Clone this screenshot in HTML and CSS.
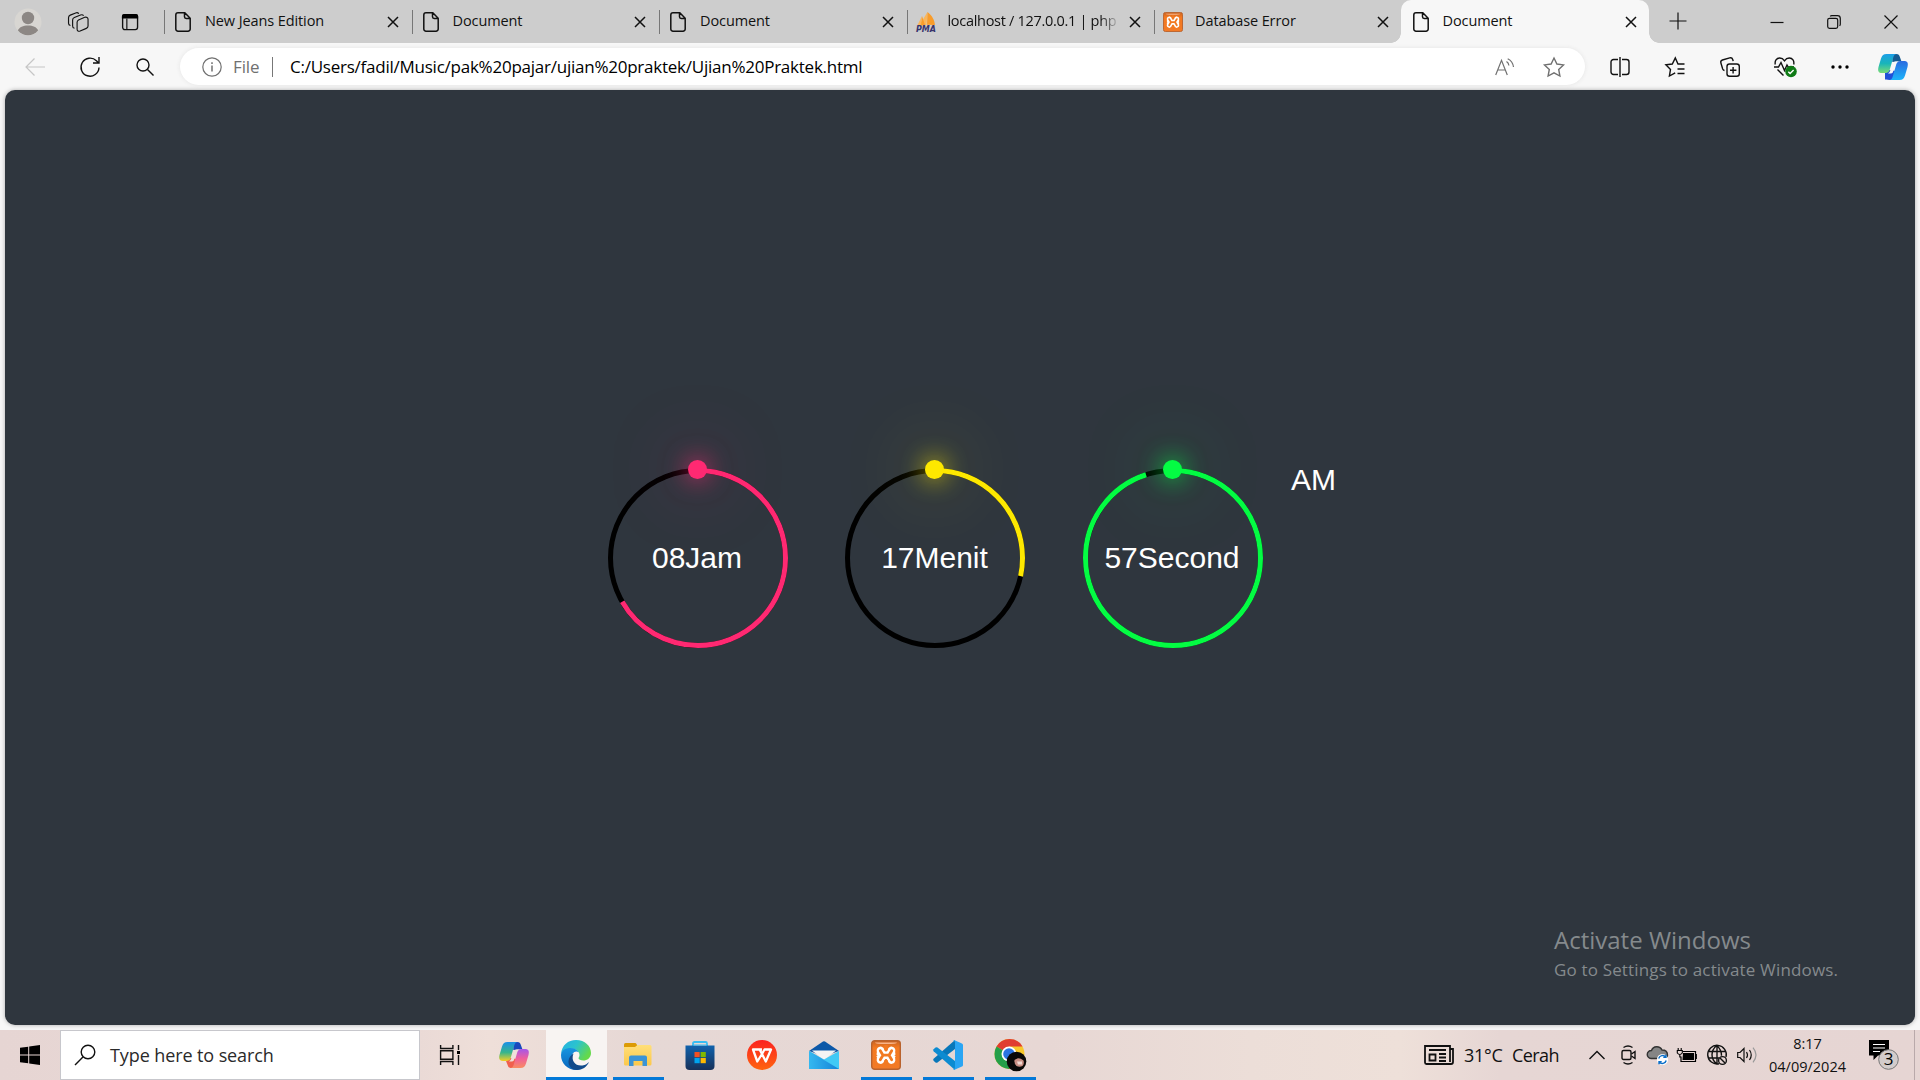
FILE: index.html
```html
<!DOCTYPE html>
<html lang="id">
<head>
<meta charset="utf-8">
<title>Document</title>
<link rel="stylesheet" href="styles.css">
</head>
<body>
<svg class="defs" width="0" height="0">
  <defs>
    <symbol id="page" viewBox="0 0 16 20"><path d="M3 .8h6.800l5.400 5.400v10.800a2.200 2.200 0 0 1-2.200 2.200H3A2.200 2.200 0 0 1 .8 17V3A2.200 2.200 0 0 1 3 .8zM9.500 1v3.800a1.700 1.700 0 0 0 1.700 1.700h3.800" fill="none" stroke="#111" stroke-width="1.500"/></symbol>
    <symbol id="cross" viewBox="0 0 12 12"><path d="M1 1l10 10M11 1L1 11" stroke="#111" stroke-width="1.500" fill="none"/></symbol>
    <linearGradient id="xamppFill" x1="0" y1="0" x2="0" y2="1"><stop offset="0" stop-color="#c96322"/><stop offset=".25" stop-color="#f47920"/><stop offset="1" stop-color="#f27a26"/></linearGradient>
    <symbol id="xampp" viewBox="0 0 30 30">
      <rect x=".7" y=".7" width="28.600" height="28.600" rx="3" fill="url(#xamppFill)" stroke="#b9622d" stroke-width="1.400"/>
      <path d="M4 2.500h22q0 1.500-11 1.500T4 2.500z" fill="#f8b48a"/>
      <path d="M9.500 10.500v2.500q0 2 0 7M20.500 10.500v9.500M9 15.300h12M9.500 10.500l3 4.500-3 5M20.500 10.500l-3 4.500 3 5" fill="none" stroke="#fff" stroke-width="8.600" stroke-linecap="round" stroke-linejoin="round" class="knot"/>
      <path d="M9.300 10.700l2.700 4.500-2.700 4.600M20.700 10.700L18 15.200l2.700 4.600M11.500 15.200h7" fill="none" stroke="#f27a22" stroke-width="2.800" stroke-linecap="round"/>
      <path d="M13.300 5h3.400v5.200q-1.700 2-3.400 0zM13.300 25.500h3.400v-5.200q-1.700-2-3.400 0zM4 13.700l2.700 1.500L4 16.700zM26 13.700l-2.700 1.500 2.700 1.500z" fill="#f27a22"/>
    </symbol>
    <linearGradient id="cpA" x1="0" y1="0" x2="0" y2="1"><stop offset="0" stop-color="#1c9ee8"/><stop offset=".5" stop-color="#19b5b9"/><stop offset="1" stop-color="#7bdc75"/></linearGradient>
    <linearGradient id="cpB" x1="0" y1="0" x2="0" y2="1"><stop offset="0" stop-color="#2a6be0"/><stop offset="1" stop-color="#1cb4fa"/></linearGradient>
    <linearGradient id="cpC" x1="0" y1="0" x2="0" y2="1"><stop offset="0" stop-color="#1a8fe8"/><stop offset=".55" stop-color="#36b58c"/><stop offset="1" stop-color="#f4cf24"/></linearGradient>
    <linearGradient id="cpD" x1="0" y1="0" x2="0" y2="1"><stop offset="0" stop-color="#a457ea"/><stop offset=".5" stop-color="#ef5f9c"/><stop offset="1" stop-color="#f98d61"/></linearGradient>
    <linearGradient id="edgeTop" x1="0" y1="0" x2="1" y2=".5"><stop offset="0" stop-color="#27aee4"/><stop offset=".5" stop-color="#2bc3ce"/><stop offset="1" stop-color="#64d94b"/></linearGradient>
    <linearGradient id="edgeLow" x1="0" y1="0" x2="0" y2="1"><stop offset="0" stop-color="#1795e0"/><stop offset="1" stop-color="#0a66bd"/></linearGradient>
    <linearGradient id="folder" x1="0" y1="0" x2="0" y2="1"><stop offset="0" stop-color="#ffdf79"/><stop offset="1" stop-color="#fcc84b"/></linearGradient>
    <linearGradient id="store" x1="0" y1="0" x2="0" y2="1"><stop offset="0" stop-color="#0f62ad"/><stop offset="1" stop-color="#183159"/></linearGradient>
    <linearGradient id="wps" x1="0" y1="0" x2="0" y2="1"><stop offset="0" stop-color="#fb2320"/><stop offset="1" stop-color="#ff6410"/></linearGradient>
    <linearGradient id="mail" x1="0" y1="0" x2="1" y2="0"><stop offset="0" stop-color="#35b8f0"/><stop offset="1" stop-color="#1583d8"/></linearGradient>
  </defs>
</svg>

<header class="tabstrip">
  <div class="slot"><svg width="28" height="28" viewBox="0 0 28 28"><circle cx="14" cy="14" r="13.500" fill="#d8d6d2"/><circle cx="14" cy="10" r="6.200" fill="#8c8784"/><path d="M3.900 22.500C5.500 19 9 17.600 14 17.600s8.500 1.400 10.100 4.900A13.300 13.300 0 0 1 3.900 22.500z" fill="#8c8784"/></svg></div>
  <div class="slot"><svg class="line" width="22" height="20" viewBox="1 0 22 21"><path d="M11.500 8.300l6.500-2.700c1.900-.7 3.500.2 3.500 2v7.200c0 1.200-.7 2-1.800 2.400L13.200 20c-1.900.6-3.200-.3-3.200-2v-7.200c0-1.200.5-2 1.500-2.500zM7.300 17c-1.300-.2-2-1-2-2.400V8.500c0-1.300.6-2.200 1.800-2.700l6.500-2.600c1.400-.5 2.600-.2 3.200.8M3 14.200c-1.300-.2-2-1-2-2.300V6c0-1.300.6-2.200 1.800-2.700L8.500 1c1.400-.5 2.600-.2 3.200.8"/></svg></div>
  <div class="slot"><svg width="18" height="18" viewBox="0 0 20 20"><rect x="1.800" y="1.800" width="16.600" height="16.600" rx="2.500" fill="none" stroke="#111" stroke-width="1.500"/><path d="M1 6V3.500A2.500 2.500 0 0 1 3.500 1h13A2.500 2.500 0 0 1 19 3.500V6z"/><path d="M6.500 6v12" stroke="#111" stroke-width="1.300"/></svg></div>
  <nav class="tabs">
    <div class="tab"><svg class="fav page"><use href="#page"/></svg><span class="title">New Jeans Edition</span><svg class="x"><use href="#cross"/></svg></div>
    <div class="tab"><svg class="fav page"><use href="#page"/></svg><span class="title">Document</span><svg class="x"><use href="#cross"/></svg></div>
    <div class="tab"><svg class="fav page"><use href="#page"/></svg><span class="title">Document</span><svg class="x"><use href="#cross"/></svg></div>
    <div class="tab pma"><svg class="fav" viewBox="0 0 20 20"><path d="M11.500 0l-1 13L3 14zM6 4L5 13l-4 1z" fill="#fab65a"/><path d="M11.500 0c5 4 7 8 7.500 13l-8-.2zM6 4l3 9-4 .5z" fill="#f89c2a"/><text x="0" y="19.500" textLength="20" class="pma-text">PMA</text></svg><span class="title fade">localhost / 127.0.0.1 | php</span><svg class="x"><use href="#cross"/></svg></div>
    <div class="tab pma"><svg class="fav"><use href="#xampp"/></svg><span class="title">Database Error</span><svg class="x"><use href="#cross"/></svg></div>
    <div class="tab active"><svg class="fav page"><use href="#page"/></svg><span class="title">Document</span><svg class="x"><use href="#cross"/></svg></div>
  </nav>
  <div class="newtab"><svg class="line" width="18" height="18" viewBox="0 0 18 18"><path d="M9 .5v17M.5 9h17"/></svg></div>
  <div class="wincontrols">
    <svg class="line" width="14" height="14" viewBox="0 0 14 14"><path d="M.5 7.500h13"/></svg>
    <svg class="line" width="14" height="14" viewBox="0 0 14 14"><rect x=".7" y="3.300" width="10" height="10" rx="1.800"/><path d="M3.200 1.400C3.700.8 4 .7 4.700.7h5.800a2.800 2.800 0 0 1 2.800 2.800v5.800c0 .7-.2 1-.7 1.500"/></svg>
    <svg class="line" width="14" height="14" viewBox="0 0 14 14"><path d="M.5.5l13 13M13.500.5l-13 13"/></svg>
  </div>
</header>

<div class="toolbar">
  <div class="tool"><svg class="line pale" width="20" height="18" viewBox="0 0 20 18"><path d="M20 9H1M9.500.5L1 9l8.500 8.500"/></svg></div>
  <div class="tool"><svg class="line thick" width="20" height="22" viewBox="0 0 20 22"><path d="M19 11.500a9 9 0 1 1-2.600-6.700l2 2M19 1v6h-6"/></svg></div>
  <div class="tool"><svg class="line thick" width="18" height="18" viewBox="0 0 18 18"><circle cx="7" cy="7" r="6"/><path d="M11.500 11.500l6 6"/></svg></div>
  <div class="address">
    <svg class="line grey" width="20" height="20" viewBox="0 0 20 20"><circle cx="10" cy="10" r="9.200"/><path d="M10 8.500v6M10 5.300v1.600" stroke-width="1.500"/></svg>
    <span class="scheme">File</span><i class="bar"></i><span class="url">C:/Users/fadil/Music/pak%20pajar/ujian%20praktek/Ujian%20Praktek.html</span>
    <svg class="line grey read" width="20" height="18" viewBox="0 0 20 18"><path d="M.7 17L6.500 2.300 12.300 17M2.700 12h7.600M11.500 3.500c1.400.9 2.200 2.200 2.400 4M12.700.7c3.300 1.600 5.300 4.500 5.800 8.300" /></svg>
    <svg class="line grey star" width="22" height="20" viewBox="0 0 22 20"><path d="M11 1l2.900 6 6.600.9-4.800 4.600 1.200 6.500-5.900-3.100L5.100 19l1.200-6.500L1.500 7.900 8.100 7z" stroke-width="1.400"/></svg>
  </div>
  <div class="tool"><svg class="line thick" width="20" height="20" viewBox="0 0 20 20"><path d="M8 2.500H3.500A2.500 2.500 0 0 0 1 5v10a2.500 2.500 0 0 0 2.500 2.500H8M12 2.500h4.500A2.500 2.500 0 0 1 19 5v10a2.500 2.500 0 0 1-2.500 2.500H12M10 0v20"/></svg></div>
  <div class="tool"><svg class="line thick" width="20" height="20" viewBox="0 0 20 20"><path d="M19.500 7H13L10.300 1 7.300 7 .9 7.800l4.600 4.600L4.400 19l5.800-3.100M12.500 12h7M12.500 16.500h7"/></svg></div>
  <div class="tool"><svg class="line thick" width="20" height="20" viewBox="0 0 20 20"><rect x="7" y="7" width="12.300" height="12.300" rx="2.500"/><path d="M13.100 10v6.400M10 13.200h6.400M4.500 13.500c-.9-.2-1.500-.8-1.800-1.600L.9 6c-.4-1.300.2-2.500 1.500-3L9.700.9c1.500-.4 2.600.3 3 1.600l.5 1.600"/></svg></div>
  <div class="tool"><svg class="line thick" width="22" height="20" viewBox="0 0 22 20"><path d="M1.300 7.500C.5 4 2.500 1 5.700 1 8 1 9.500 2.300 10.500 3.800 11.500 2.300 13 1 15.300 1c3.200 0 5.200 3 4.400 6.500M0 10h4.500L7 5.500l3.500 8L13 8l1.200 2H20M3.500 12.500l6 6"/><circle cx="17" cy="14.500" r="5.800" fill="#0f7b16" stroke="none"/><path d="M14.300 14.700l1.800 1.800 3.500-3.500" stroke="#fff"/></svg></div>
  <div class="tool"><svg width="18" height="4" viewBox="0 0 18 4"><circle cx="2" cy="2" r="1.700"/><circle cx="9" cy="2" r="1.700"/><circle cx="16" cy="2" r="1.700"/></svg></div>
  <div class="tool last"><svg width="30" height="28" viewBox="0 0 30 28"><path d="M14 1h4.500c2 0 2.800 1 3.400 3l1.400 4-9 1z" fill="#175b91"/><path d="M7 26.500c1.500 0 4 .5 6 .5h2.500l2.500-9-7-1-4 3z" fill="#2050d8"/><path d="M8.500 1H19c-2 0-3 1-3.600 3l-3.600 12.500c-.7 2.300-1.800 3.500-4.300 3.500H4c-3.500 0-4.500-2-3.500-6L3 5.500C4 2.300 5.500 1 8.500 1z" fill="url(#cpA)"/><path d="M21.500 27H11c2 0 3-1 3.600-3l3.600-12.500C18.900 9.200 20 8 22.500 8H26c3.500 0 4.500 2 3.500 6L27 22.500c-1 3.200-2.500 4.500-5.500 4.500z" fill="url(#cpB)"/><path d="M17.500 8.500h2.500q-2 1-2.700 3.500l-2.500 7.500q-.6 1-2.300 1h-2.500q1.800-1 2.500-3.500l2.200-6.500q.8-2 2.800-2z" fill="#f7f7f7"/></svg></div>
</div>

<main class="viewport">
  <section class="time">
    <div class="circle pink"><svg viewBox="0 0 180 180"><circle cx="90" cy="90" r="87.500" class="track"/><circle cx="90" cy="90" r="87.500" pathLength="60" stroke-dasharray="40 60" class="arc"/></svg><i class="dot"></i><span>08Jam</span></div>
    <div class="circle yellow"><svg viewBox="0 0 180 180"><circle cx="90" cy="90" r="87.500" class="track"/><circle cx="90" cy="90" r="87.500" pathLength="60" stroke-dasharray="17 60" class="arc"/></svg><i class="dot"></i><span>17Menit</span></div>
    <div class="circle green"><svg viewBox="0 0 180 180"><circle cx="90" cy="90" r="87.500" class="track"/><circle cx="90" cy="90" r="87.500" pathLength="60" stroke-dasharray="57 60" class="arc"/></svg><i class="dot"></i><span>57Second</span></div>
    <div class="ampm">AM</div>
  </section>
</main>
<aside class="watermark"><div class="w1">Activate Windows</div><div class="w2">Go to Settings to activate Windows.</div></aside>

<footer class="taskbar">
  <div class="start"><svg width="20" height="20" viewBox="0 0 20 20"><path d="M0 2.800L8.200 1.700V9.500H0zM9.200 1.500L20 0v9.500H9.200zM0 10.500h8.200v7.800L0 17.200zM9.200 10.500H20V20L9.200 18.500z"/></svg></div>
  <div class="search"><svg class="line thick" width="22" height="22" viewBox="0 0 22 22"><circle cx="14" cy="8" r="6.800"/><path d="M9.200 12.800L1 21"/></svg><span>Type here to search</span></div>
  <div class="taskview"><svg class="line thick" width="20" height="20" viewBox="0 0 20 20"><path d="M.6 0v3.500h12.300V0M.6 20v-3.500h12.300V20M.6 5.800h12.300v8.400H.6zM18.500 0v5M18.500 10v10"/><path d="M17 6h3v3h-3z" fill="#000" stroke="none"/></svg></div>
  <div class="apps">
    <div class="app"><svg width="30" height="28" viewBox="0 0 30 28"><path d="M14 1h4.500c2 0 2.800 1 3.400 3l1.400 4-9 1z" fill="#1848bd"/><path d="M7 20l2 5c.5 1.500 1.500 2 4 2h2.500l2.500-9-7-1z" fill="#f0604d"/><path d="M8.500 1H19c-2 0-3 1-3.600 3l-3.600 12.500c-.7 2.300-1.800 3.500-4.300 3.500H4c-3.500 0-4.500-2-3.500-6L3 5.500C4 2.300 5.500 1 8.500 1z" fill="url(#cpC)"/><path d="M21.500 27H11c2 0 3-1 3.600-3l3.600-12.500C18.900 9.200 20 8 22.500 8H26c3.500 0 4.500 2 3.500 6L27 22.500c-1 3.200-2.500 4.500-5.500 4.500z" fill="url(#cpD)"/><path d="M17.500 8.500h2.500q-2 1-2.700 3.500l-2.500 7.500q-.6 1-2.300 1h-2.500q1.800-1 2.500-3.500l2.200-6.500q.8-2 2.800-2z" fill="#efe0da"/></svg></div>
    <div class="app current"><svg width="30" height="30" viewBox="0 0 30 30"><path d="M0 14C1 5 7 0 15 0c9 0 15 6 15 13 0 5-4 7.500-7.500 7.500-3 0-5-1-5-2.200 0-.8 1-1.300 1-3.300 0-3-3-6.500-8.500-6.500C5 8.500 1 11 0 14z" fill="url(#edgeTop)"/><path d="M0 15c0-4.500 4.500-7 9.500-7 4 0 7 2 8 4-4-2-7 1.500-7 6 0 6 4 11 9 11.500C8 32 0 24 0 15z" fill="url(#edgeLow)"/><path d="M12.500 13.500c-3 7 2 13 9 12 3-.5 5-2 6.500-3.500-2 5-7 8-12 8-6 0-9-5-8.500-9 .3-3.500 2.500-6 5-7.500z" fill="#114a8b"/></svg></div>
    <div class="app open"><svg width="28" height="24" viewBox="0 0 28 24"><path d="M0 1.500Q0 0 1.500 0h10L13 1.500V4H0z" fill="#dc9b05"/><path d="M0 4h11l2.500-2H26q1.500 0 1.500 1.500V21q0 1.500-1.500 1.500H1.500Q0 22.500 0 21z" fill="url(#folder)"/><path d="M5 23V14.500q0-2 2-2h14q2 0 2 2V23h-4.500v-5h-9v5z" fill="#3b94d6"/></svg></div>
    <div class="app"><svg width="30" height="30" viewBox="0 0 30 30"><path d="M8 7V3.500Q8 2 9.500 2h11Q22 2 22 3.500V7" fill="none" stroke="#35bdf3" stroke-width="1.800"/><path d="M.5 5.500h29V26q0 4-4 4h-21q-4 0-4-4z" fill="url(#store)"/><path d="M8 5h14" stroke="#35bdf3"/><path d="M9.500 12h5.200v5.200H9.500z" fill="#f25022"/><path d="M15.600 12h5.200v5.200h-5.200z" fill="#7fba00"/><path d="M9.500 18h5.200v5.200H9.500z" fill="#00a4ef"/><path d="M15.600 18h5.200v5.200h-5.200z" fill="#ffb900"/></svg></div>
    <div class="app"><svg width="30" height="30" viewBox="0 0 30 30"><circle cx="15" cy="15" r="15" fill="url(#wps)"/><path d="M15 9.500H6L10.300 21.500 15 14l3.800 7.500L24 9.500h-6.500L15 14l-2.200-4" fill="none" stroke="#fff" stroke-width="2.300" stroke-linejoin="round"/></svg></div>
    <div class="app"><svg width="30" height="28" viewBox="0 0 30 28"><path d="M0 10L14 .5q1-.5 2 0L30 10 15 15z" fill="#0c58a8"/><path d="M3 9.500h24L15 19z" fill="#f4f4f4"/><path d="M0 10l15 8.500L30 10v18H0z" fill="#41c9f5"/><path d="M0 10v18h30z" fill="url(#mail)"/></svg></div>
    <div class="app open"><svg width="30" height="30"><use href="#xampp"/></svg></div>
    <div class="app open"><svg width="30" height="30" viewBox="0 0 30 30"><path d="M22 0v9L4.500 22.500q-1 .7-2 0L.6 20.700q-1-1 0-2z" fill="#0877b9"/><path d="M22 30v-9L4.500 7.500q-1-.7-2 0L.6 9.300q-1 1 0 2z" fill="#0c8bd1"/><path d="M21.500.3L29 3.600q1 .5 1 1.500v19.800q0 1-1 1.500l-7.500 3.300q-1 .2-1.500-.5 2 .3 2-2V2.800q0-2.300-2-2 .5-.8 1.500-.5z" fill="#2aa5f3"/></svg></div>
    <div class="app open"><svg width="32" height="32" viewBox="-1 -1 32 32"><circle cx="14.500" cy="14" r="15" fill="#f8c82c"/><path d="M14 14L1.500 6.500A15 15 0 0 1 27.500 6.500H14z" fill="#e03c31"/><path d="M14 14L1.500 6.500A15 15 0 0 0 14 29l5-12z" fill="#249f49"/><circle cx="14" cy="14" r="7.500" fill="#fff"/><circle cx="14" cy="14" r="5.800" fill="#2a74e2"/><circle cx="21.500" cy="21.500" r="9.800" fill="#090807"/><path d="M19.500 20q4-3.500 9 .5 1 3.500-1 5.500-3 1.500-6 0-2.500-2.500-2-6z" fill="#c98f84"/><path d="M22 21.500h5v3h-4z" fill="#f1d9d2"/></svg></div>
  </div>
  <div class="weather"><svg class="line news" width="30" height="20" viewBox="0 0 30 20"><path d="M26 1H1v16.500q0 1.500 1.500 1.500H27q2 0 2-2V4h-3zM26 4v13M5 5h17M15 9h7M15 12.500h7M15 16h7M5.500 9.500h6v6h-6z"/></svg><span class="deg">31°C</span><span class="sky">Cerah</span></div>
  <div class="tray">
    <svg class="line thick" width="16" height="10" viewBox="0 0 16 10"><path d="M.5 9L8 1.500 15.500 9"/></svg>
    <svg class="line thick" width="16" height="20" viewBox="0 0 16 20"><rect x="1" y="5.500" width="9" height="9" rx="1.500"/><path d="M10.500 9L14 6.500v7L10.500 11M2.500 2.500q4.500-3 9 0M2.500 17.500q4.500 3 9 0"/></svg>
    <svg width="22" height="20" viewBox="0 0 22 20"><path d="M4 13.500A4 4 0 0 1 4.500 5.500C6 .5 13 .5 15 5c3.500 0 5.500 2 5.500 5q0 3.500-3 3.500z" fill="#858585" stroke="#333" stroke-width="1.400"/><circle cx="15.500" cy="14.500" r="5.600" fill="#fff"/><path d="M11.700 13.500a4 4 0 0 1 7-1.500M19.200 15.500a4 4 0 0 1-7 1.500M19 9.700v2.700h-2.700M12 19.300v-2.700h2.700" fill="none" stroke="#0a6ec8" stroke-width="1.400"/></svg>
    <svg width="20" height="16" viewBox="0 0 20 16"><path d="M5.500 4.500h13v10H4V9.500M19.300 7v5" fill="none" stroke="#000" stroke-width="1.200"/><path d="M6 6h11v7H5.500z"/><path d="M1.200 1v2.500M4.200 1v2.500M.3 3.500h5v2.500q-2.500 3-5 0zM2.800 7.500V10H4" stroke="#000" fill="none" stroke-width="1.100"/></svg>
    <svg class="line thick" width="20" height="20" viewBox="0 0 20 20"><path d="M12 18.700A9.300 9.300 0 1 1 19 12M9.500.8c-6 5-6 13 0 18M10 .8c3.500 3 4.500 6.500 4.500 10M10 .8V19M1.500 6.500h17M1.500 13H12"/><circle cx="15.500" cy="15.500" r="3.900"/><path d="M13 13l5 5"/></svg>
    <svg class="line" width="20" height="16" viewBox="0 0 20 16"><path d="M.7 5.500H3L7 1.500v13l-4-4H.7zM9.500 5q2 3 0 6M12.500 3q3.500 5 0 10"/><path d="M16 .7q6 7.300 0 14.600" stroke="#999"/></svg>
  </div>
  <div class="datetime"><span>8:17</span><span>04/09/2024</span></div>
  <div class="notif"><svg width="30" height="32" viewBox="0 0 30 32"><path d="M0 1h20v15.500H9L4.500 21v-4.500H0z"/><path d="M4 5.500h12M4 9h12M4 12.500h7" stroke="#fff" stroke-width="1.100"/><circle cx="19.500" cy="20.500" r="9.800" fill="#d3cccb" stroke="#777"/><text x="19.500" y="26" text-anchor="middle" class="count">3</text></svg></div>
  <div class="desk"></div>
</footer>
</body>
</html>
```
FILE: styles.css
```css
* { box-sizing: border-box; }
body {
  margin: 0; width: 1920px; height: 1080px; overflow: hidden;
  background: #f7f7f7; color: #111; position: relative;
  font-family: "Open Sans", "Noto Sans", sans-serif;
  display: flex; flex-direction: column;
}
svg { display: block; flex: none; overflow: visible; }
.defs { position: absolute; }
.line { fill: none; stroke: #111; stroke-width: 1.2; }
.thick { stroke-width: 1.4; }
.pale { stroke: #c6c6c6; }
.grey { stroke: #707070; }
.knot { stroke-width: 7.4px; }

.tabstrip { height: 43px; background: #cdcdcd; display: flex; align-items: center; padding-left: 2px; flex: none; }
.slot { width: 51px; display: flex; justify-content: center; }
.slot:nth-child(3) { width: 52px; margin-right: 7px; }
.tabs { display: flex; height: 43px; align-self: stretch; margin-right: 4px; }
.tab { width: 247.5px; display: flex; align-items: center; padding: 0 12px; position: relative; flex: none; }
.tab:last-child { width: 248.5px; }
.tab::before { content: ""; position: absolute; left: 1px; top: 10px; width: 1px; height: 24px; background: #777; }
.fav { width: 20px; height: 20px; }
.fav.page { width: 16px; }
.title { font-size: 14.5px; line-height: 20px; margin: -2px 0 0 14px; flex: 1; white-space: nowrap; letter-spacing: -.1px; }
.x { width: 12px; height: 12px; }
.pma { padding-left: 10px; }
.pma .title { margin-left: 12px; }
.pma .fade { letter-spacing: -.3px; -webkit-mask-image: linear-gradient(90deg, #000 152px, transparent 172px); }
.pma-text { font: italic bold 8px "DejaVu Sans", sans-serif; fill: #37346b; }
.active { background: #f7f7f7; border-radius: 10px 10px 0 0; }
.active::before { left: -10px; top: auto; bottom: 0; width: 10px; height: 10px; background: radial-gradient(circle at 0 0, transparent 9.5px, #f7f7f7 10px); }
.active::after { content: ""; position: absolute; right: -10px; bottom: 0; width: 10px; height: 10px; background: radial-gradient(circle at 100% 0, transparent 9.5px, #f7f7f7 10px); }
.newtab { width: 50px; display: flex; justify-content: center; margin-top: -1px; }
.wincontrols { flex: 1; display: flex; justify-content: flex-end; gap: 43px; padding-right: 22px; }

.toolbar { height: 47px; flex: none; display: flex; align-items: center; padding-left: 7px; }
.tool { width: 55px; display: flex; justify-content: center; flex: none; }
.tool.last { width: 51px; }
.address { width: 1405px; height: 37px; margin: 0 7px 0 8px; border-radius: 19px; background: #fff; box-shadow: 0 0 4px #e4e4e4; display: flex; align-items: center; padding: 0 20px 0 22px; font-size: 17px; flex: none; }
.scheme { margin-left: 11px; color: #707070; width: 39px; letter-spacing: -.1px; }
.bar { width: 1px; height: 20px; background: #777; margin-right: 17px; }
.url { flex: 1; color: #000; white-space: nowrap; letter-spacing: -.24px; }
.star { margin-left: 28px; }

.viewport { margin: 0 5px 5px; height: 935px; flex: none; border-radius: 10px; background: #2f363e; box-shadow: 0 0 4px #aaa; display: flex; align-items: center; padding-left: 602.5px; }
.time { display: flex; gap: 57.5px; font: 30px "Liberation Sans", Arial, sans-serif; color: #fff; }
.circle { position: relative; width: 180px; height: 180px; display: flex; align-items: center; justify-content: center; }
.circle svg { position: absolute; inset: 0; width: 180px; height: 180px; }
.circle span { position: relative; left: -.5px; }
.track, .arc { fill: none; stroke: #000; stroke-width: 5; }
.arc { stroke: var(--c); transform: rotate(-90deg); transform-origin: center; }
.dot { position: absolute; left: 80.3px; top: -7.4px; width: 18.8px; height: 18.8px; border-radius: 50%; background: var(--c); box-shadow: 0 0 25px var(--c), 0 0 75px var(--c); }
.pink { --c: #ff2972; }
.yellow { --c: #fee800; }
.green { --c: #04fc43; }
.ampm { margin: -4.5px 0 0 -29px; }

.watermark { position: absolute; left: 1554px; top: 922px; color: #858a8d; white-space: nowrap; }
.w1 { font-size: 24px; line-height: 35px; }
.w2 { font-size: 17px; line-height: 25px; letter-spacing: .16px; }

.taskbar { height: 50px; flex: none; display: flex; align-items: center; background: linear-gradient(90deg, #e6d5d3 0, #eadad6 420px, #efdfd9 490px, #e6d8d5 640px, #e7d7d4 1050px, #ecded8 1250px, #eee0d9 1400px, #e6d6d4 1500px, #e6d5d3 100%); }
.start { width: 60px; display: flex; justify-content: center; }
.search { width: 360px; height: 50px; background: #fff; border: 1px solid #c7c7cc; display: flex; align-items: center; padding-left: 13px; font-size: 18px; color: #2a2a2a; }
.search span { margin-left: 14px; white-space: nowrap; letter-spacing: -.1px; }
.taskview { width: 60px; display: flex; justify-content: center; }
.apps { display: flex; height: 50px; margin-left: 3px; }
.app { width: 62px; display: flex; align-items: center; justify-content: center; position: relative; }
.current { background: #f8f4f2; margin: 0 .5px; width: 61px; }
.open::after, .current::after { content: ""; position: absolute; bottom: 0; left: 5.5px; width: 51px; height: 3px; background: #0379d8; }
.current::after { left: 0; width: 61px; }
.weather { margin-left: 383px; display: flex; align-items: center; font-size: 18px; white-space: nowrap; }
.news { stroke-width: 1.8; }
.deg { margin-left: 10px; width: 48px; letter-spacing: -.3px; }
.sky { letter-spacing: -.6px; }
.tray { position: absolute; left: 1589px; display: grid; grid-template-columns: 32px 26px 30px 30px 30px 20px; align-items: center; height: 50px; }
.datetime { position: absolute; left: 1758px; width: 99px; display: flex; flex-direction: column; text-align: center; font-size: 14.5px; line-height: 23px; }
.notif { position: absolute; left: 1869px; }
.desk { position: absolute; left: 1914px; width: 1px; height: 50px; background: #b9a9aa; }
.count { font: 17px "Open Sans", sans-serif; }
```
